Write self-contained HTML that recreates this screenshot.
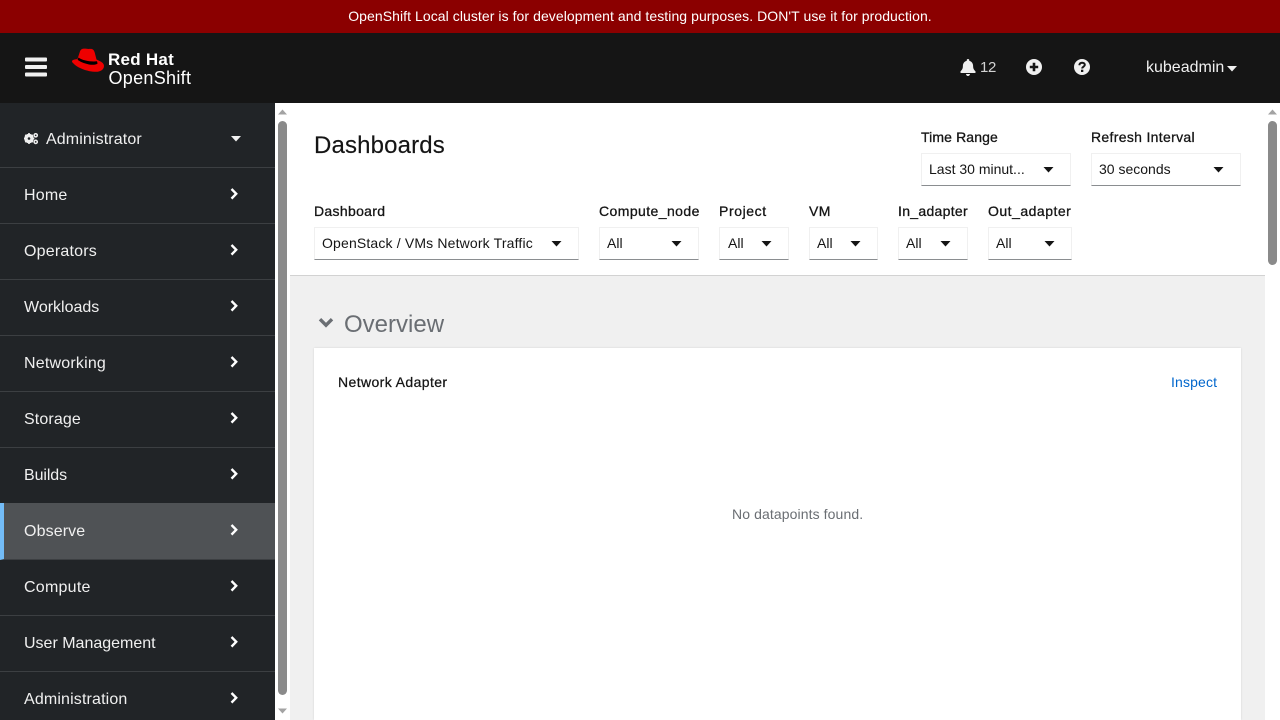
<!DOCTYPE html>
<html lang="en"><head><meta charset="utf-8"><title>Dashboards · OpenShift</title>
<style>
*{box-sizing:border-box}
html,body{margin:0;padding:0;width:1280px;height:720px;overflow:hidden;background:#fff;font-family:"Liberation Sans",sans-serif;color:#151515}
.a{position:absolute;white-space:nowrap}
#banner{left:0;top:0;width:1280px;height:33px;background:#8b0000;color:#fff;font-size:14px;line-height:33px;text-align:center;letter-spacing:.065px}
#mast{left:0;top:33px;width:1280px;height:70px;background:#151515}
#side{left:0;top:103px;width:275px;height:617px;background:#212427;overflow:hidden}
.nav{position:absolute;left:0;width:275px;height:57px;border-bottom:1px solid #3c3f42;color:#f0f0f0;font-size:16px}
.nav span{position:absolute;left:24px;top:19px;line-height:20px}
.nav svg{position:absolute;left:229px;top:20px}
.sel{position:absolute;height:33px;background:#fff;border:1px solid #f0f0f0;border-bottom-color:#8a8d90;font-size:14px;line-height:31px;padding-left:7px;color:#151515;white-space:nowrap}
.sel svg{position:absolute;top:13px}
.lab{position:absolute;font-size:14px;line-height:18px;color:#151515;-webkit-text-stroke:.3px #151515;white-space:nowrap}
</style></head><body>
<div class="a" id="banner">OpenShift Local cluster is for development and testing purposes. DON'T use it for production.</div>
<div class="a" id="mast"></div>

<svg class="a" style="left:25px;top:57px" width="22" height="20"><rect x="0" y=".5" width="22" height="4" rx="1" fill="#f0f0f0"/><rect x="0" y="8" width="22" height="4" rx="1" fill="#f0f0f0"/><rect x="0" y="15.500" width="22" height="4" rx="1" fill="#f0f0f0"/></svg>
<svg class="a" style="left:72px;top:48px" width="32" height="24" viewBox="0 0 32 24"><path fill="#e00" d="M11 .8C13 .3 15.500 1.200 17.500.9 20.500.5 21.800 1.500 22.700 4.500L24.500 11.500C29 13.500 32 15 32 18 32 21.500 28.500 23.800 24 23.800 15 23.800 5 19.500 1.500 15.500.5 14.500 0 14 0 13.500 0 12 2 11.500 5.500 11L7.800 4C8.500 2 9.300 1.200 11 .8Z"/><path fill="#000" d="M6.500 9.500C10 12.500 19 14 25 13.300L25.600 15.500C24 17 20 17 17 16.500 12 15.500 7.500 13.500 5.600 11.800Z"/></svg>
<div class="a" style="left:108px;top:51px;font-size:17px;line-height:18px;font-weight:bold;color:#fff;letter-spacing:.25px">Red Hat</div>
<div class="a" style="left:108.500px;top:68px;font-size:18px;line-height:20px;color:#fff;letter-spacing:.3px">OpenShift</div>

<svg class="a" style="left:960px;top:59px" width="16" height="17" viewBox="0 0 16 17"><path fill="#f0f0f0" d="M8 0C7.200 0 6.700.6 6.700 1.300V1.900C4.400 2.500 2.900 4.400 2.900 6.900 2.900 10 1.800 11 .7 12.200.4 12.500.3 12.800.3 13 .3 13.600.8 14 1.300 14H14.700C15.200 14 15.700 13.600 15.700 13 15.700 12.800 15.600 12.500 15.300 12.200 14.200 11 13.100 10 13.100 6.900 13.100 4.400 11.600 2.500 9.300 1.900V1.300C9.300.6 8.800 0 8 0ZM6 15C6 16.100 6.900 17 8 17S10 16.100 10 15Z"/></svg>
<div class="a" style="left:980px;top:57.500px;font-size:15px;line-height:20px;color:#d2d2d2;letter-spacing:-.4px">12</div>
<svg class="a" style="left:1026px;top:59px" width="16" height="16" viewBox="0 0 16 16"><circle cx="8" cy="8" r="8" fill="#f0f0f0"/><path d="M8 3.800V12.200M3.800 8H12.200" stroke="#151515" stroke-width="2.600"/></svg>
<svg class="a" style="left:1074px;top:59px" width="16" height="16" viewBox="0 0 16 16"><circle cx="8" cy="8" r="8" fill="#f0f0f0"/><path d="M5.300 6.200C5.500 4.600 6.600 3.700 8.100 3.700 9.700 3.700 10.800 4.600 10.800 5.900 10.800 7.700 8.200 7.600 8.200 9.500" fill="none" stroke="#151515" stroke-width="2"/><rect x="7" y="10.700" width="2.300" height="2.300" fill="#151515"/></svg>
<div class="a" style="left:1146px;top:58px;font-size:16px;line-height:20px;color:#f0f0f0;letter-spacing:0">kubeadmin</div>
<svg class="a" style="left:1227px;top:66px" width="10" height="6"><path d="M0 0H10L5 5.500Z" fill="#f0f0f0"/></svg>

<div class="a" id="side"></div>
<div class="a" style="left:0;top:103px;width:275px;height:617px;overflow:hidden">
 <div class="nav" style="top:0;height:65px"><svg style="left:24px;top:30px" width="14" height="12" viewBox="0 0 14 12"><circle cx="5" cy="5.500" r="3.500" fill="none" stroke="#f0f0f0" stroke-width="2.600"/><path d="M5 0V11M-.3 5.500H10.300M1.300 1.800 8.700 9.200M8.700 1.800 1.300 9.200" stroke="#f0f0f0" stroke-width="1.600"/><circle cx="5" cy="5.500" r="1.300" fill="#212427"/><circle cx="11.700" cy="2.300" r="1.600" fill="none" stroke="#f0f0f0" stroke-width="1.500"/><circle cx="11.700" cy="8.900" r="1.600" fill="none" stroke="#f0f0f0" stroke-width="1.500"/></svg><span style="left:46px;top:27px;letter-spacing:.12px">Administrator</span><svg style="left:231px;top:33px" width="10" height="6"><path d="M0 0H10L5 5.500Z" fill="#f0f0f0"/></svg></div>
 <div class="nav" style="top:64px"><span style="letter-spacing:.2px">Home</span><svg width="10" height="14"><path d="M2.500 2 7.200 6.800 2.500 11.600" fill="none" stroke="#fff" stroke-width="2.400"/></svg></div>
 <div class="nav" style="top:120px"><span style="letter-spacing:.2px">Operators</span><svg width="10" height="14"><path d="M2.500 2 7.200 6.800 2.500 11.600" fill="none" stroke="#fff" stroke-width="2.400"/></svg></div>
 <div class="nav" style="top:176px"><span>Workloads</span><svg width="10" height="14"><path d="M2.500 2 7.200 6.800 2.500 11.600" fill="none" stroke="#fff" stroke-width="2.400"/></svg></div>
 <div class="nav" style="top:232px"><span style="letter-spacing:.2px">Networking</span><svg width="10" height="14"><path d="M2.500 2 7.200 6.800 2.500 11.600" fill="none" stroke="#fff" stroke-width="2.400"/></svg></div>
 <div class="nav" style="top:288px"><span style="letter-spacing:.12px">Storage</span><svg width="10" height="14"><path d="M2.500 2 7.200 6.800 2.500 11.600" fill="none" stroke="#fff" stroke-width="2.400"/></svg></div>
 <div class="nav" style="top:344px"><span style="letter-spacing:-.1px">Builds</span><svg width="10" height="14"><path d="M2.500 2 7.200 6.800 2.500 11.600" fill="none" stroke="#fff" stroke-width="2.400"/></svg></div>
 <div class="nav" style="top:400px;background:#4f5255;border-left:4px solid #73bcf7"><span style="left:20px;letter-spacing:.12px">Observe</span><svg style="left:225px" width="10" height="14"><path d="M2.500 2 7.200 6.800 2.500 11.600" fill="none" stroke="#fff" stroke-width="2.400"/></svg></div>
 <div class="nav" style="top:456px"><span style="letter-spacing:.25px">Compute</span><svg width="10" height="14"><path d="M2.500 2 7.200 6.800 2.500 11.600" fill="none" stroke="#fff" stroke-width="2.400"/></svg></div>
 <div class="nav" style="top:512px"><span>User Management</span><svg width="10" height="14"><path d="M2.500 2 7.200 6.800 2.500 11.600" fill="none" stroke="#fff" stroke-width="2.400"/></svg></div>
 <div class="nav" style="top:568px"><span style="letter-spacing:.15px">Administration</span><svg width="10" height="14"><path d="M2.500 2 7.200 6.800 2.500 11.600" fill="none" stroke="#fff" stroke-width="2.400"/></svg></div>
</div>

<div class="a" style="left:275px;top:103px;width:15px;height:617px;background:#fff"></div>
<svg class="a" style="left:277px;top:109px" width="11" height="6"><path d="M1 5.500H10L5.500 .5Z" fill="#a3a3a3"/></svg>
<div class="a" style="left:278px;top:121px;width:9px;height:574px;background:#8a8a8a;border-radius:4.500px"></div>
<svg class="a" style="left:277px;top:708px" width="11" height="6"><path d="M1 .5H10L5.500 5.500Z" fill="#a3a3a3"/></svg>

<div class="a" style="left:290px;top:275px;width:975px;height:445px;background:#f0f0f0;border-top:1px solid #d2d2d2"></div>
<div class="a" style="left:1265px;top:103px;width:15px;height:617px;background:#fff"></div>
<svg class="a" style="left:1267px;top:109px" width="11" height="6"><path d="M1 5.500H10L5.500 .5Z" fill="#a3a3a3"/></svg>
<div class="a" style="left:1268px;top:121px;width:9px;height:144px;background:#8a8a8a;border-radius:4.500px"></div>

<div class="a" style="left:314px;top:130px;font-size:24px;line-height:32px;color:#151515;letter-spacing:.15px;-webkit-text-stroke:.15px #151515">Dashboards</div>

<div class="lab" style="left:921px;top:128px;letter-spacing:.12px">Time Range</div>
<div class="sel" style="left:921px;top:153px;width:150px">Last 30 minut...<svg style="left:121px" width="11" height="7"><path d="M.5 0H10.500L5.500 5.500Z" fill="#151515"/></svg></div>
<div class="lab" style="left:1091px;top:128px;letter-spacing:.32px">Refresh Interval</div>
<div class="sel" style="left:1091px;top:153px;width:150px">30 seconds<svg style="left:121px" width="11" height="7"><path d="M.5 0H10.500L5.500 5.500Z" fill="#151515"/></svg></div>

<div class="lab" style="left:314px;top:202px;letter-spacing:.32px">Dashboard</div>
<div class="sel" style="left:314px;top:227px;width:265px;letter-spacing:.16px">OpenStack / VMs Network Traffic<svg style="left:236px" width="11" height="7"><path d="M.5 0H10.500L5.500 5.500Z" fill="#151515"/></svg></div>
<div class="lab" style="left:599px;top:202px;letter-spacing:.42px">Compute_node</div>
<div class="sel" style="left:599px;top:227px;width:100px">All<svg style="left:71px" width="11" height="7"><path d="M.5 0H10.500L5.500 5.500Z" fill="#151515"/></svg></div>
<div class="lab" style="left:719px;top:202px;letter-spacing:.6px">Project</div>
<div class="sel" style="left:719px;top:227px;width:70px;padding-left:8px">All<svg style="left:41px" width="11" height="7"><path d="M.5 0H10.500L5.500 5.500Z" fill="#151515"/></svg></div>
<div class="lab" style="left:809px;top:202px;letter-spacing:.4px">VM</div>
<div class="sel" style="left:809px;top:227px;width:69px">All<svg style="left:40px" width="11" height="7"><path d="M.5 0H10.500L5.500 5.500Z" fill="#151515"/></svg></div>
<div class="lab" style="left:898px;top:202px;letter-spacing:.3px">In_adapter</div>
<div class="sel" style="left:898px;top:227px;width:70px">All<svg style="left:41px" width="11" height="7"><path d="M.5 0H10.500L5.500 5.500Z" fill="#151515"/></svg></div>
<div class="lab" style="left:988px;top:202px;letter-spacing:.5px">Out_adapter</div>
<div class="sel" style="left:988px;top:227px;width:84px">All<svg style="left:55px" width="11" height="7"><path d="M.5 0H10.500L5.500 5.500Z" fill="#151515"/></svg></div>

<svg class="a" style="left:318px;top:317px" width="16" height="12"><path d="M2 2.200 8 8.200 14 2.200" fill="none" stroke="#6a6e73" stroke-width="3.400"/></svg>
<div class="a" style="left:344px;top:309px;font-size:24px;line-height:32px;color:#6a6e73">Overview</div>

<div class="a" style="left:314px;top:348px;width:927px;height:372px;background:#fff;box-shadow:0 0 2px rgba(3,3,3,.12)"></div>
<div class="a" style="left:338px;top:373px;font-size:14px;line-height:18px;color:#151515;-webkit-text-stroke:.25px #151515;letter-spacing:.4px">Network Adapter</div>
<div class="a" style="left:1171px;top:373px;font-size:14px;line-height:18px;color:#06c;letter-spacing:.15px">Inspect</div>
<div class="a" style="left:732px;top:505px;font-size:14px;line-height:18px;color:#6a6e73;letter-spacing:.1px">No datapoints found.</div>
</body></html>
